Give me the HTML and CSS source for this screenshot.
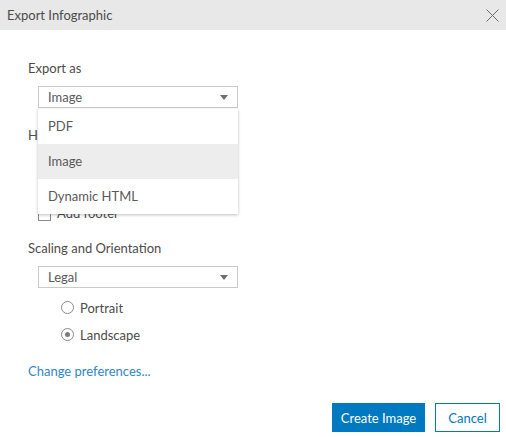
FILE: index.html
```html
<!DOCTYPE html>
<html>
<head>
<meta charset="utf-8">
<link rel="stylesheet" href="styles.css">
</head>
<body>
<div class="dialog">
  <div class="titlebar">
    <span class="title">Export Infographic</span>
    <svg class="close" width="13" height="13" viewBox="0 0 13 13"><path d="M0.5 0.5 L12.5 12.5 M12.5 0.5 L0.5 12.5" stroke="#6e6e6e" stroke-width="1" fill="none"/></svg>
  </div>
  <div class="content">
    <div class="label first">Export as</div>
    <div class="select-wrap">
      <div class="select"><span>Image</span><span class="arrow"></span></div>
      <ul class="menu">
        <li>PDF</li>
        <li class="active">Image</li>
        <li>Dynamic HTML</li>
      </ul>
    </div>
    <div class="label hf">Header and footer</div>
    <div class="check"><span class="box"></span>Add footer</div>
    <div class="label scale">Scaling and Orientation</div>
    <div class="select sel2"><span>Legal</span><span class="arrow"></span></div>
    <div class="radio r1"><span class="circle"></span>Portrait</div>
    <div class="radio r2"><span class="circle checked"></span>Landscape</div>
    <a class="link">Change preferences...</a>
  </div>
  <div class="actions">
    <button class="btn primary">Create Image</button>
    <button class="btn secondary">Cancel</button>
  </div>
</div>
</body>
</html>
```
FILE: styles.css
```css
html, body {
  margin: 0;
  padding: 0;
  background: #fff;
}
.dialog {
  width: 506px;
  height: 437px;
  font-family: Lato, "Open Sans", sans-serif;
  font-size: 13px;
  color: #4c4c4c;
  position: relative;
}
.titlebar {
  height: 30px;
  background: #e8e8e8;
  display: flex;
  align-items: center;
  justify-content: space-between;
  padding: 0 7px 0 7px;
}
.title {
  font-size: 13px;
  color: #4c4c4c;
}
.content {
  padding: 0 28px;
}
.label {
  line-height: 16px;
  height: 16px;
}
.label.first { margin-top: 30px; }
.select-wrap {
  position: relative;
  margin-left: 10px;
  margin-top: 10px;
  width: 200px;
}
.select {
  box-sizing: border-box;
  width: 200px;
  height: 22px;
  border: 1px solid #cacaca;
  display: flex;
  align-items: center;
  justify-content: space-between;
  padding: 0 9px 0 9px;
  color: #595959;
  background: #fff;
}
.arrow {
  width: 0;
  height: 0;
  border-left: 4px solid transparent;
  border-right: 4px solid transparent;
  border-top: 5px solid #6e6e6e;
  margin-top: 1px;
}
.menu {
  position: absolute;
  left: 0;
  top: 23px;
  width: 200px;
  margin: 0;
  padding: 0;
  list-style: none;
  background: #fff;
  box-shadow: 0 1px 3px rgba(0,0,0,0.25);
  z-index: 5;
}
.menu li {
  height: 35px;
  line-height: 35px;
  padding-left: 10px;
  color: #595959;
}
.menu li.active { background: #ededed; }
.label.hf { margin-top: 19px; }
.check {
  display: flex;
  align-items: center;
  margin-left: 10px;
  margin-top: 57px;
  height: 26px;
  line-height: 26px;
}
.box {
  width: 11px;
  height: 11px;
  border: 1px solid #8a8a8a;
  margin-right: 6px;
  margin-top: 3px;
  box-sizing: content-box;
}
.label.scale { margin-top: 14px; }
.sel2 { margin-left: 10px; margin-top: 10px; }
.radio {
  display: flex;
  align-items: center;
  margin-left: 33px;
  height: 27px;
}
.radio.r1 { margin-top: 6px; }
.circle {
  box-sizing: border-box;
  width: 13px;
  height: 13px;
  border: 1px solid #8a8a8a;
  border-radius: 50%;
  margin-right: 6px;
  display: flex;
  align-items: center;
  justify-content: center;
}
.circle.checked::after {
  content: "";
  width: 5px;
  height: 5px;
  border-radius: 50%;
  background: #7a7a7a;
}
.link {
  display: block;
  margin-top: 15px;
  line-height: 16px;
  color: #2f87cc;
  cursor: pointer;
}
.actions {
  position: absolute;
  right: 6px;
  bottom: 5px;
  display: flex;
  gap: 10px;
}
.btn {
  font-family: Lato, "Open Sans", sans-serif;
  font-size: 13px;
  height: 29px;
  box-sizing: border-box;
  padding: 0 6px;
  white-space: nowrap;
  cursor: pointer;
}
.primary {
  background: #0079c1;
  color: #fff;
  border: 1px solid #0079c1;
  width: 93px;
}
.secondary {
  background: #fff;
  color: #0079c1;
  border: 1px solid #0079c1;
  width: 65px;
}
```
